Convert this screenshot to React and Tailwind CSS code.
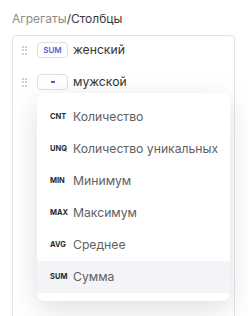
import React from 'react'

const items = [
  { code: 'CNT', label: 'Количество' },
  { code: 'UNQ', label: 'Количество уникальных' },
  { code: 'MIN', label: 'Минимум' },
  { code: 'MAX', label: 'Максимум' },
  { code: 'AVG', label: 'Среднее' },
  { code: 'SUM', label: 'Сумма', active: true },
]

function Handle() {
  return (
    <div className="grid grid-cols-2 gap-x-[1px] gap-y-[1.5px] w-[5px]">
      {[0, 1, 2, 3, 4, 5].map((i) => (
        <span key={i} className="block w-[2px] h-[2px] bg-[#cdd0d6]" />
      ))}
    </div>
  )
}

function Row({ badge, text }) {
  return (
    <div className="flex items-center h-6">
      <Handle />
      <div className="ml-[10px] w-[31px] h-[16px] flex items-center justify-center rounded-[4px] border border-[#dde1e7] text-[8px] font-semibold text-[#4b63d8]">
        {badge}
      </div>
      <span className="ml-[5px] text-[12.2px] text-[#333]">{text}</span>
    </div>
  )
}

export default function App() {
  return (
    <div className="w-[248px] h-[316px] overflow-hidden bg-white font-['Inter',sans-serif]">
      <div className="px-3 pt-[11px]">
        <div className="text-[12px] leading-4">
          <span className="text-[#8b8b8b]">Агрегаты</span>
          <span className="text-[#3a3a3a]">/Столбцы</span>
        </div>
        <div className="relative mt-2 w-[223px] h-[320px] rounded-[4px] border border-[#e1e5eb] pt-[2px] pl-[9px]">
          <div className="flex flex-col gap-2">
            <Row badge="SUM" text="женский" />
            <Row badge={<span className="block w-[4px] h-[1.5px] bg-[#4b63d8]" />} text="мужской" />
          </div>
          <div className="absolute left-[24px] top-[57px] w-[193px] py-2 rounded-[8px] bg-white shadow-[0_8px_28px_rgba(0,0,0,0.13)]">
            {items.map((it) => (
              <div
                key={it.code}
                className={`flex items-center h-8 pl-[13px] ${it.active ? 'bg-[#f3f4f8]' : ''}`}
              >
                <span className="w-[23px] text-[7.5px] font-bold text-[#2b2b2b]">{it.code}</span>
                <span className="text-[12.2px] text-[#616161]">{it.label}</span>
              </div>
            ))}
          </div>
        </div>
      </div>
    </div>
  )
}
